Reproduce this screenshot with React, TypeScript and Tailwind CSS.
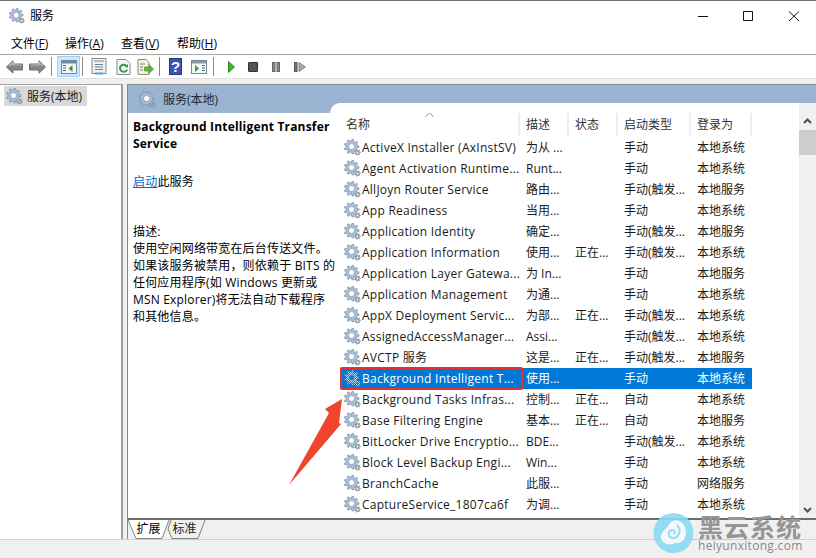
import React from "react";

type Row = { name: string; desc: string; status?: string; start: string; login: string; selected?: boolean };

const rows: Row[] = [
  { name: "ActiveX Installer (AxInstSV)", desc: "为从 ...", start: "手动", login: "本地系统" },
  { name: "Agent Activation Runtime...", desc: "Runt...", start: "手动", login: "本地系统" },
  { name: "AllJoyn Router Service", desc: "路由...", start: "手动(触发...", login: "本地服务" },
  { name: "App Readiness", desc: "当用...", start: "手动", login: "本地系统" },
  { name: "Application Identity", desc: "确定...", start: "手动(触发...", login: "本地服务" },
  { name: "Application Information", desc: "使用...", status: "正在...", start: "手动(触发...", login: "本地系统" },
  { name: "Application Layer Gatewa...", desc: "为 In...", start: "手动", login: "本地服务" },
  { name: "Application Management", desc: "为通...", start: "手动", login: "本地系统" },
  { name: "AppX Deployment Servic...", desc: "为部...", status: "正在...", start: "手动(触发...", login: "本地系统" },
  { name: "AssignedAccessManager...", desc: "Assi...", start: "手动(触发...", login: "本地系统" },
  { name: "AVCTP 服务", desc: "这是...", status: "正在...", start: "手动(触发...", login: "本地服务" },
  { name: "Background Intelligent T...", desc: "使用...", start: "手动", login: "本地系统", selected: true },
  { name: "Background Tasks Infras...", desc: "控制...", status: "正在...", start: "自动", login: "本地系统" },
  { name: "Base Filtering Engine", desc: "基本...", status: "正在...", start: "自动", login: "本地服务" },
  { name: "BitLocker Drive Encryptio...", desc: "BDE...", start: "手动(触发...", login: "本地系统" },
  { name: "Block Level Backup Engi...", desc: "Win...", start: "手动", login: "本地系统" },
  { name: "BranchCache", desc: "此服...", start: "手动", login: "网络服务" },
  { name: "CaptureService_1807ca6f", desc: "为调...", start: "手动", login: "本地系统" },
];

function gearPath(cx: number, cy: number, outer: number, inner: number, hole: number, teeth: number) {
  let d = "";
  const step = (Math.PI * 2) / teeth;
  for (let i = 0; i < teeth; i++) {
    const a = i * step;
    const pts = [
      [inner, a - step * 0.5],
      [inner, a - step * 0.28],
      [outer, a - step * 0.16],
      [outer, a + step * 0.16],
      [inner, a + step * 0.28],
    ];
    pts.forEach(([r, t], j) => {
      d += `${i === 0 && j === 0 ? "M" : "L"}${(cx + r * Math.cos(t)).toFixed(2)} ${(cy + r * Math.sin(t)).toFixed(2)}`;
    });
  }
  d += "Z";
  d += `M${cx + hole} ${cy}A${hole} ${hole} 0 1 0 ${cx - hole} ${cy}A${hole} ${hole} 0 1 0 ${cx + hole} ${cy}Z`;
  return d;
}

const bigGear = gearPath(7.6, 7.6, 7.4, 5.6, 3, 9);
const smallGear = gearPath(13.4, 13.4, 3.4, 2.4, 1.1, 7);

function Gear({ selected, className = "" }: { selected?: boolean; className?: string }) {
  return (
    <svg viewBox="0 0 17 17" className={`shrink-0 ${className}`}>
      {selected && (
        <defs>
          <pattern id="dither" width="2" height="2" patternUnits="userSpaceOnUse">
            <rect width="2" height="2" fill="#0078d7" />
            <rect width="1" height="1" fill="#c6e0f7" />
            <rect x="1" y="1" width="1" height="1" fill="#c6e0f7" />
          </pattern>
        </defs>
      )}
      <path d={smallGear} fillRule="evenodd" fill={selected ? "url(#dither)" : "#8f959c"} />
      <path
        d={bigGear}
        fillRule="evenodd"
        fill={selected ? "url(#dither)" : "#a8c0d8"}
        stroke={selected ? "none" : "#6f8197"}
        strokeWidth="0.6"
      />
      <circle cx="7.6" cy="7.6" r="3" fill={selected ? "#0078d7" : "#ffffff"} stroke={selected ? "#d6e8f8" : "#7e93aa"} strokeWidth="0.6" />
    </svg>
  );
}

function Menu({ label, hot }: { label: string; hot: string }) {
  return (
    <span>
      {label}(<span className="underline">{hot}</span>)
    </span>
  );
}

function Sep() {
  return <div className="h-[19px] w-px shrink-0 bg-[#8a8a8a]" />;
}

function Arrow({ flip }: { flip?: boolean }) {
  return (
    <svg width="17" height="14" viewBox="0 0 17 14" className={flip ? "-scale-x-100" : ""}>
      <path d="M0.5 7 L7 0.8 V4 H16.5 V10 H7 V13.2 Z" fill="#858585" stroke="#6c6c6c" />
      <path d="M3 6 L7 2.6 V5 H15.5" fill="none" stroke="#c0c0c0" strokeWidth="1.2" />
    </svg>
  );
}

function Toolbar() {
  return (
    <div className="flex h-[24px] shrink-0 items-center border-b border-[#e0e0e0] bg-white pl-[6px]">
      <Arrow />
      <div className="w-[6px]" />
      <Arrow flip />
      <div className="w-[5px]" />
      <Sep />
      <div className="ml-[5px] flex h-[21px] w-[23px] items-center justify-center border border-[#99d1ff] bg-[#cce8ff]">
        <svg width="16" height="14" viewBox="0 0 16 14">
          <rect x="0.5" y="0.5" width="15" height="13" fill="#f4f6f8" stroke="#7a8794" />
          <rect x="1" y="1" width="14" height="2.5" fill="#6f8aa6" />
          <path d="M2 5.5 H5 M2 8 H5 M2 10.5 H5" stroke="#4a6a8a" />
          <path d="M11.5 5 V12 L7.5 8.5 Z" fill="#2f9e44" />
        </svg>
      </div>
      <div className="w-[2px]" />
      <Sep />
      <svg width="16" height="17" viewBox="0 0 16 17" className="ml-[8px]">
        <rect x="1" y="0.5" width="14" height="15" fill="#f2f2f2" stroke="#8a8a8a" />
        <rect x="3" y="2" width="10" height="2" fill="#b6bcc4" />
        <path d="M4 6.5 H12 M4 9 H12 M4 11.5 H12" stroke="#6d7f92" />
        <rect x="4" y="14.5" width="8" height="2" fill="#4aa3e0" />
      </svg>
      <svg width="15" height="16" viewBox="0 0 15 16" className="ml-[9px]">
        <path d="M1 0.5 H10 L14 4.5 V15.5 H1 Z" fill="#f8f8f8" stroke="#8a8a8a" />
        <path d="M10.6 7.2 A3.6 3.6 0 1 0 11 10.5" fill="none" stroke="#2f9e44" strokeWidth="2" />
        <path d="M8.5 8 L12 8.5 L12 5 Z" fill="#2f9e44" />
      </svg>
      <svg width="17" height="16" viewBox="0 0 17 16" className="ml-[6px]">
        <path d="M1 0.5 H9 L12 3.5 V15.5 H1 Z" fill="#f7f3dd" stroke="#8f8a70" />
        <path d="M3 5 H8 M3 8 H6 M3 11 H6" stroke="#77806a" />
        <path d="M7.5 8 H12 V5.5 L16.5 10 L12 14.5 V12 H7.5 Z" fill="#59b540" stroke="#3a8f2a" strokeWidth="0.6" />
      </svg>
      <div className="w-[5px]" />
      <Sep />
      <div className="ml-[9px] flex h-[17px] w-[13px] items-center justify-center border border-[#28397f] bg-[#3b55b5] font-['Liberation_Sans',sans-serif] text-[15px] leading-none font-bold text-white">
        ?
      </div>
      <svg width="16" height="14" viewBox="0 0 16 14" className="ml-[9px]">
        <rect x="0.5" y="0.5" width="15" height="13" fill="#f4f6f8" stroke="#7a8794" />
        <rect x="1" y="1" width="14" height="2.5" fill="#8b98a5" />
        <path d="M11 5.5 H14 M11 8 H14 M11 10.5 H14" stroke="#4a6a8a" />
        <path d="M4 5 V12 L8 8.5 Z" fill="#2f9e44" />
      </svg>
      <div className="w-[6px]" />
      <Sep />
      <svg width="7" height="12" viewBox="0 0 7 12" className="ml-[14px]">
        <path d="M0.5 0.5 L6.5 6 L0.5 11.5 Z" fill="#43b02a" stroke="#2f8f1e" />
      </svg>
      <div className="ml-[13px] h-[10px] w-[10px] rounded-[1px] border border-[#333333] bg-[#555555]" />
      <svg width="8" height="10" viewBox="0 0 8 10" className="ml-[14px]">
        <rect x="0.5" y="0.5" width="2.5" height="9" fill="#8a8a8a" stroke="#666666" />
        <rect x="5" y="0.5" width="2.5" height="9" fill="#8a8a8a" stroke="#666666" />
      </svg>
      <svg width="12" height="10" viewBox="0 0 12 10" className="ml-[14px]">
        <rect x="0.5" y="0.5" width="2.5" height="9" fill="#777777" stroke="#555555" />
        <path d="M5 0.5 L11.5 5 L5 9.5 Z" fill="#a8a8a8" stroke="#888888" />
      </svg>
    </div>
  );
}

function ListRow({ row }: { row: Row }) {
  const on = row.selected;
  return (
    <div className={`flex h-[21px] w-[412px] shrink-0 items-center whitespace-nowrap ${on ? "bg-[#0078d7] text-white" : "text-[#1a1a1a]"}`}>
      <div className="flex w-[180px] items-center pl-[4px]">
        <Gear selected={on} className="h-[17px] w-[17px]" />
        <span className="ml-px tracking-[0.25px]">{row.name}</span>
      </div>
      <div className="w-[49px] pl-[6px]">{row.desc}</div>
      <div className="w-[49px] pl-[6px]">{row.status}</div>
      <div className="w-[73px] pl-[6px]">{row.start}</div>
      <div className="pl-[6px]">{row.login}</div>
    </div>
  );
}

function HeaderCell({ label, className }: { label: string; className: string }) {
  return <div className={`flex h-[23px] items-center border-r-2 border-[#eeeeee] pl-[6px] ${className}`}>{label}</div>;
}

function Details() {
  return (
    <div className="relative z-10 flex w-[202px] shrink-0 flex-col">
      <div className="flex h-[28px] items-center gap-[7px] bg-[#9ab3d0] pt-px pl-[11px] text-[#1f2a36]">
        <Gear className="h-[17px] w-[17px]" />
        <span>服务(本地)</span>
      </div>
      <div className="flex-1 bg-white pt-[5px] pl-[5px] leading-[17px] tracking-[0.18px] whitespace-nowrap text-black">
        <div className="font-bold">Background Intelligent Transfer</div>
        <div className="font-bold">Service</div>
        <div className="mt-[21px]">
          <span className="text-[#0066cc] underline">启动</span>此服务
        </div>
        <div className="mt-[33px]">描述:</div>
        <div>使用空闲网络带宽在后台传送文件。</div>
        <div>如果该服务被禁用，则依赖于 BITS 的</div>
        <div>任何应用程序(如 Windows 更新或</div>
        <div>MSN Explorer)将无法自动下载程序</div>
        <div>和其他信息。</div>
      </div>
    </div>
  );
}

function ServiceList() {
  return (
    <div className="flex min-w-0 flex-1 flex-col bg-[#9ab3d0] pt-[18px]">
      <div className="flex min-h-0 flex-1 rounded-tl-[10px] bg-white pt-[10px] pl-[10px]">
        <div className="relative w-[459px] overflow-hidden">
          <div className="flex w-[412px] text-[#333333]">
            <HeaderCell label="名称" className="w-[180px] pt-[1px]" />
            <HeaderCell label="描述" className="w-[49px]" />
            <HeaderCell label="状态" className="w-[49px]" />
            <HeaderCell label="启动类型" className="w-[73px]" />
            <HeaderCell label="登录为" className="w-[61px]" />
          </div>
          <div className="flex h-[381px] flex-col overflow-hidden pt-[1px]">
            {rows.map((r) => (
              <ListRow key={r.name} row={r} />
            ))}
          </div>
          {/* sort arrow sitting over the name header */}
          <svg width="9" height="5" viewBox="0 0 9 5" className="absolute top-[-1px] left-[85px]">
            <path d="M0.5 4.5 L4.5 0.8 L8.5 4.5" fill="none" stroke="#8a8a8a" />
          </svg>
        </div>
        <div className="-mt-[10px] flex w-[17px] flex-col items-center bg-[#f0f0f0] pt-[10px]">
          <svg width="17" height="17" viewBox="0 0 17 17">
            <path d="M5 10 L8.5 6.5 L12 10" fill="none" stroke="#505050" strokeWidth="2" />
          </svg>
          <div className="h-[25px] w-[17px] bg-[#cdcdcd]" />
          <div className="flex-1" />
          <svg width="17" height="17" viewBox="0 0 17 17">
            <path d="M5 7 L8.5 10.5 L12 7" fill="none" stroke="#505050" strokeWidth="2" />
          </svg>
        </div>
      </div>
    </div>
  );
}

function Tabs() {
  return (
    <div className="flex h-[21px] shrink-0 border-t-2 border-[#6e6e6e] bg-[#f0f0f0]">
      <div className="relative flex h-[19px] w-[41px] shrink-0 items-center justify-center pb-px text-black">
        <svg width="42" height="19" viewBox="0 0 42 19" className="absolute top-0 left-0">
          <path d="M0 0 L8 18.5 H34 L41 0 Z" fill="#ffffff" />
          <path d="M0 0 L8 18.5 H34 L41 0" fill="none" stroke="#808080" />
        </svg>
        <span className="relative whitespace-nowrap">扩展</span>
      </div>
      <div className="relative -ml-[5px] flex h-[19px] w-[41px] shrink-0 items-center justify-center pb-px text-[#222222]">
        <svg width="42" height="19" viewBox="0 0 42 19" className="absolute top-0 left-0">
          <path d="M4 9 L8 18.5 H34 L41 0" fill="none" stroke="#808080" />
          <path d="M4 9 L7 0" fill="none" stroke="#808080" />
        </svg>
        <span className="relative whitespace-nowrap">标准</span>
      </div>
    </div>
  );
}

function Watermark() {
  return (
    <div className="absolute top-[513px] left-[653px] z-20 flex items-start">
      <svg width="41" height="40" viewBox="0 0 41 40" className="opacity-90">
        <circle cx="20.5" cy="20" r="20" fill="#88daf5" />
        <path d="M8 23 C9 17 14 17 16 11 C20 5 29 6 32 14 C35 23 31 31 22 30 C17 33 7 31 8 23 Z" fill="#f4fbfe" />
        <path d="M24 12 C29 17 26 25 20 25 C15 25 14 18 19 17 C22 17 23 20 20.5 21" fill="none" stroke="#88daf5" strokeWidth="2" />
      </svg>
      <div className="ml-[4px] flex flex-col whitespace-nowrap font-['Noto_Sans_CJK_SC',sans-serif] text-[#969696]">
        <span className="text-[25px] leading-[26px] font-bold tracking-[1px]">黑云系统</span>
        <span className="font-['Open_Sans',sans-serif] text-[12px] leading-[14px] tracking-[0.3px] text-[#8a8a8a]">heiyunxitong.com</span>
      </div>
    </div>
  );
}

export default function App() {
  return (
    <div className="relative flex h-[558px] w-[816px] flex-col overflow-hidden bg-[#f0f0f0] font-['Open_Sans','Noto_Sans_CJK_SC',sans-serif] text-[12px] leading-none">
      <div className="flex h-[32px] shrink-0 items-center border-t border-[#6e6e6e] bg-white pb-[1px] pl-[9px]">
        <Gear className="h-[16px] w-[16px]" />
        <span className="ml-[5px] text-black">服务</span>
        <div className="ml-auto flex items-center pr-[17px]">
          <svg width="101" height="12" viewBox="0 0 101 12">
            <path d="M0 6.5 H10 M45.5 1.5 H54.5 V10.5 H45.5 Z M91 1.5 L101 11 M101 1.5 L91 11" fill="none" stroke="#111111" />
          </svg>
        </div>
      </div>
      <div className="flex h-[23px] shrink-0 items-center border-b border-[#a8a8a8] bg-white pt-[1px] pl-[11px] text-black">
        <div className="w-[54px]"><Menu label="文件" hot="F" /></div>
        <div className="w-[56px]"><Menu label="操作" hot="A" /></div>
        <div className="w-[56px]"><Menu label="查看" hot="V" /></div>
        <div><Menu label="帮助" hot="H" /></div>
      </div>
      <Toolbar />
      <div className="h-[5px] shrink-0 bg-[#f0f0f0]" />
      <div className="flex min-h-0 flex-1">
        <div className="w-[123px] shrink-0 border-t border-r-2 border-[#a0a0a0] bg-white pt-px pl-[4px]">
          <div className="flex h-[20px] w-[83px] items-center bg-[#d9d9d9] pt-px pl-[2px] text-[#1a1a1a]">
            <Gear className="h-[17px] w-[17px]" />
            <span className="ml-[4px]">服务(本地)</span>
          </div>
        </div>
        <div className="ml-[4px] flex min-w-0 flex-1 flex-col border-t border-l border-[#8a8a8a]">
          <div className="flex min-h-0 flex-1">
            <Details />
            <ServiceList />
          </div>
          <Tabs />
        </div>
      </div>
      <div className="h-[19px] shrink-0 border-t border-[#cfcfcf] bg-[#f0f0f0]" />
      {/* annotation drawn over the screenshot */}
      <div className="absolute top-[367px] left-[340px] z-20 h-[23px] w-[183px] rounded-[2px] border-2 border-[#e8302a]" />
      <svg width="60" height="92" viewBox="0 0 60 92" className="absolute top-[396px] left-[286px] z-20">
        <path d="M56 3 L39 13 L43 17 L3 89 L55 28 L53 27 Z" fill="#f0452a" />
      </svg>
      <Watermark />
    </div>
  );
}
